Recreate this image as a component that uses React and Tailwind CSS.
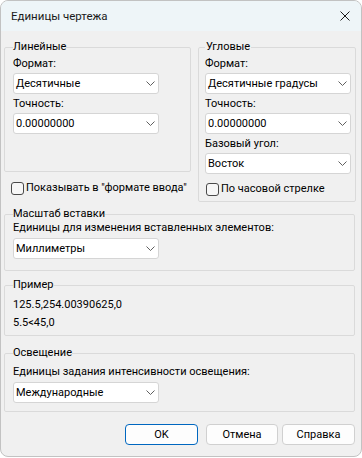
import React from "react";

function Chevron() {
  return (
    <svg width="9" height="5" viewBox="0 0 9 5" className="shrink-0">
      <polyline points="0.5,0.5 4.5,4.5 8.5,0.5" fill="none" stroke="#5f5f5f" strokeWidth="1" />
    </svg>
  );
}

function Select({ value, className = "" }) {
  return (
    <div
      className={`flex h-[21px] w-[146px] items-center justify-between rounded-[3px] border border-[#d5d5d5] bg-white pl-[2px] pr-[3px] ${className}`}
    >
      <span className="whitespace-nowrap leading-[16px]">{value}</span>
      <Chevron />
    </div>
  );
}

function Checkbox() {
  return <div className="h-[13px] w-[13px] shrink-0 rounded-[3px] border border-[#4a4a4a] bg-[#f7f7f7]" />;
}

function Label({ children, className = "" }) {
  return <div className={`whitespace-nowrap leading-[16px] ${className}`}>{children}</div>;
}

function Button({ children, primary, className = "" }) {
  return (
    <div
      className={`flex h-[21px] items-center justify-center rounded-[4px] border bg-[#fdfdfd] leading-[16px] ${
        primary ? "border-[#0067c0]" : "border-[#d0d0d0]"
      } ${className}`}
    >
      {children}
    </div>
  );
}

export default function App() {
  return (
    <div className="min-h-[458px] w-[362px] bg-white font-['Roboto',Arial,sans-serif] text-[11px] text-[#000000]">
      <div className="flex h-[457px] w-[362px] flex-col overflow-hidden rounded-[8px] border border-[#c2c2c2] bg-[#f0f0f0]">
        {/* title bar */}
        <div className="flex h-[30px] shrink-0 items-center justify-between bg-[#eef5f8] pl-[10px] pr-[11px]">
          <span className="text-[11.5px] leading-[16px] text-[#1a1a1a]">Единицы чертежа</span>
          <svg width="10" height="10" viewBox="0 0 10 10">
            <path d="M0.5 0.5 L9.5 9.5 M9.5 0.5 L0.5 9.5" stroke="#1a1a1a" strokeWidth="1" fill="none" />
          </svg>
        </div>

        {/* content */}
        <div className="flex flex-col pl-[3px] pt-[8px]">
          <div className="flex">
            {/* left column */}
            <div className="flex w-[187px] flex-col">
              <fieldset className="h-[133px] rounded-[2px] border border-[#dadada] pl-[8px]">
                <legend className="px-0 leading-[16px]">Линейные</legend>
                <Label className="mt-[1px]">Формат:</Label>
                <Select value="Десятичные" className="mt-[1px]" />
                <Label className="mt-[2px]">Точность:</Label>
                <Select value="0.00000000" className="mt-[1px]" />
              </fieldset>
              <div className="mt-[8px] flex h-[16px] items-center pl-[7px]">
                <Checkbox />
                <span className="ml-[2px] whitespace-nowrap leading-[16px]">Показывать в "формате ввода"</span>
              </div>
            </div>

            {/* right column */}
            <fieldset className="ml-[7px] h-[163px] w-[158px] rounded-[2px] border border-[#dadada] pl-[6px]">
              <legend className="px-[1px] leading-[16px]">Угловые</legend>
              <Label className="mt-[1px]">Формат:</Label>
              <Select value="Десятичные градусы" className="mt-[1px]" />
              <Label className="mt-[2px]">Точность:</Label>
              <Select value="0.00000000" className="mt-[1px]" />
              <Label className="mt-[2px]">Базовый угол:</Label>
              <Select value="Восток" className="mt-[1px]" />
              <div className="mt-[7px] flex h-[16px] items-center pl-[1px]">
                <Checkbox />
                <span className="ml-[2px] whitespace-nowrap leading-[16px]">По часовой стрелке</span>
              </div>
            </fieldset>
          </div>

          <fieldset className="mt-[4px] h-[65px] w-[351px] rounded-[2px] border border-[#dadada] pl-[8px]">
            <legend className="px-0 leading-[16px]">Масштаб вставки</legend>
            <Label className="-mt-[2px]">Единицы для изменения вставленных элементов:</Label>
            <Select value="Миллиметры" className="mt-[2px]" />
          </fieldset>

          <fieldset className="mt-[6px] h-[59px] w-[351px] rounded-[2px] border border-[#dadada] pl-[8px]">
            <legend className="px-0 leading-[16px]">Пример</legend>
            <Label className="mt-[4px]">125.5,254.00390625,0</Label>
            <Label className="mt-[2px]">5.5&lt;45,0</Label>
          </fieldset>

          <fieldset className="mt-[9px] h-[67px] w-[351px] rounded-[2px] border border-[#dadada] pl-[8px]">
            <legend className="px-0 leading-[16px]">Освещение</legend>
            <Label className="mt-[3px]">Единицы задания интенсивности освещения:</Label>
            <Select value="Международные" className="mt-[2px]" />
          </fieldset>

          <div className="mt-[12px] flex pl-[121px]">
            <Button primary className="w-[73px]">OK</Button>
            <Button className="ml-[8px] w-[72px]">Отмена</Button>
            <Button className="ml-[4px] w-[73px]">Справка</Button>
          </div>
        </div>
      </div>
    </div>
  );
}
